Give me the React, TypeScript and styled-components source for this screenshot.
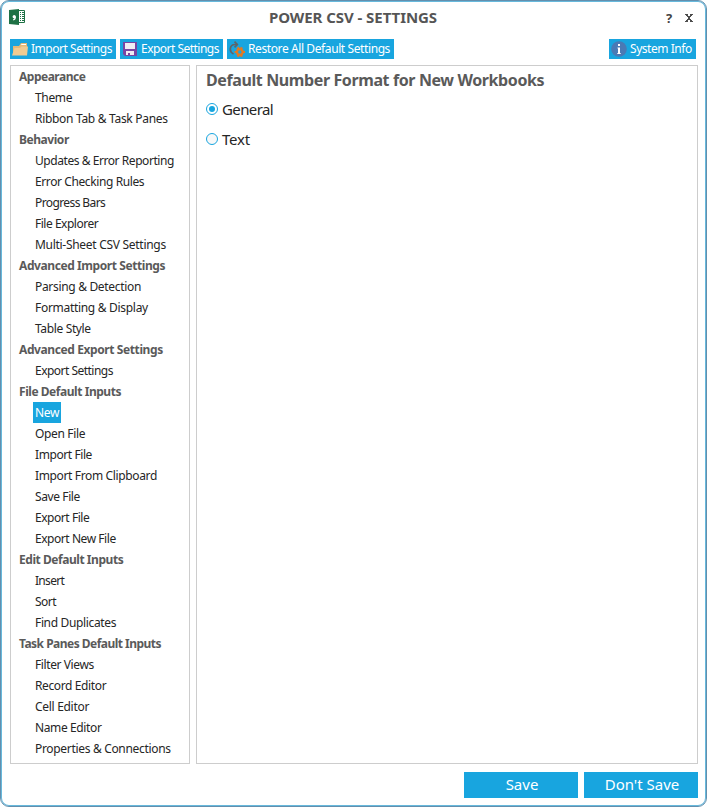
import React from "react";
import styled, { createGlobalStyle } from "styled-components";

const BLUE = "#18a5df";

const GlobalStyle = createGlobalStyle`
  * { box-sizing: border-box; }
  html, body { margin: 0; background: #fff; }
  body { font-family: "Noto Sans", "Open Sans", sans-serif; color: #222; overflow: hidden; }
  button { font: inherit; border: 0; padding: 0; margin: 0; background: none; }
`;

const Window = styled.main`
  width: 707px;
  height: 807px;
  display: flex;
  flex-direction: column;
  border: 1px solid #648fad;
  border-radius: 9px;
  box-shadow: inset 0 0 0 1px #67b9dc;
  background: #fff;
  padding: 0 8px 8px 9px;
`;

const TitleBar = styled.header`
  height: 38px;
  flex: none;
  display: grid;
  grid-template-columns: 60px 1fr 60px;
  align-items: start;
`;

const AppIcon = styled.svg`
  display: block;
  margin: 8px 0 0 -1px;
`;

const Title = styled.h1`
  margin: 6px 0 0 -2px;
  font-size: 15px;
  line-height: 20px;
  font-weight: 700;
  color: #555;
  text-align: center;
  white-space: nowrap;
  letter-spacing: -0.06px;
`;

const WindowControls = styled.div`
  display: flex;
  justify-content: flex-end;
  gap: 10px;
  padding: 7px 4px 0 0;
`;

const ControlButton = styled.button`
  width: 10px;
  height: 20px;
  display: flex;
  align-items: center;
  justify-content: center;
  font-size: 13px;
  font-weight: 700;
  color: #444;
`;

const Toolbar = styled.nav`
  display: flex;
  gap: 4px;
  height: 20px;
  flex: none;
  padding-right: 2px;
`;

const ToolButton = styled.button<{ $width: number; $end?: boolean; $spacing: number }>`
  width: ${(p) => p.$width}px;
  height: 20px;
  margin-left: ${(p) => (p.$end ? "auto" : "0")};
  display: flex;
  align-items: center;
  gap: 3px;
  padding-left: 2px;
  background: ${BLUE};
  color: #fff;
  font-size: 12px;
  line-height: 20px;
  letter-spacing: ${(p) => p.$spacing}px;
  white-space: nowrap;
  svg { flex: none; display: block; }
`;

const Body = styled.div`
  display: flex;
  gap: 6px;
  height: 699px;
  margin-top: 6px;
  flex: none;
`;

const Sidebar = styled.aside`
  width: 180px;
  border: 1px solid #cdcdcd;
`;

const GroupTitle = styled.h2<{ $spacing: number }>`
  margin: 0;
  height: 21px;
  padding-left: 8px;
  font-size: 12px;
  line-height: 21px;
  font-weight: 700;
  color: #5a5a5a;
  white-space: nowrap;
  letter-spacing: ${(p) => p.$spacing}px;
`;

const Item = styled.button<{ $active: boolean; $spacing: number }>`
  display: block;
  height: 21px;
  margin-left: 22px;
  padding: 0 2px;
  font-size: 12px;
  line-height: 21px;
  white-space: nowrap;
  letter-spacing: ${(p) => p.$spacing}px;
  color: ${(p) => (p.$active ? "#fff" : "#262626")};
  background: ${(p) => (p.$active ? BLUE : "transparent")};
`;

const Panel = styled.section`
  width: 502px;
  border: 1px solid #cdcdcd;
  padding: 3px 9px;
`;

const PanelTitle = styled.h2`
  margin: 0 0 3px;
  font-size: 16px;
  line-height: 22px;
  font-weight: 700;
  color: #5a5a5a;
  white-space: nowrap;
  letter-spacing: -0.39px;
`;

const Option = styled.label<{ $spacing: number }>`
  display: flex;
  align-items: center;
  gap: 4px;
  height: 30px;
  font-size: 15px;
  letter-spacing: ${(p) => p.$spacing}px;
  color: #262626;
`;

const Radio = styled.span<{ $checked: boolean }>`
  width: 12px;
  height: 12px;
  border: 1px solid ${BLUE};
  border-radius: 50%;
  padding: 2px;
  display: block;
  margin-top: -1px;
  background: ${(p) => (p.$checked ? "#fff" : "#f8f8f8")};
  &::after {
    content: "";
    display: block;
    width: 6px;
    height: 6px;
    border-radius: 50%;
    background: ${(p) => (p.$checked ? BLUE : "transparent")};
  }
`;

const Footer = styled.footer`
  display: flex;
  justify-content: flex-end;
  gap: 6px;
  margin-top: 8px;
`;

const FooterButton = styled.button`
  width: 114px;
  height: 26px;
  background: ${BLUE};
  color: #fff;
  font-size: 15px;
  line-height: 24px;
  padding: 0 0 2px 2px;
`;

const FolderIcon = () => (
  <svg width="16" height="16" viewBox="0 0 16 16">
    <path d="M1 14V5h6l2-3h6v12z" fill="#e3b878" />
    <path d="M9.500 3h4.500v1H9z" fill="#fff" />
    <path d="M0 14.500 2.500 7H8l1.500-1.500H16l-1 9z" fill="#efcb92" />
  </svg>
);

const DiskIcon = () => (
  <svg width="16" height="16" viewBox="0 0 16 16">
    <path d="M1 1h14v14H3l-2-2z" fill="#7845a3" />
    <path d="M3 2h10v6H3z" fill="#f0edf3" />
    <path d="M4 10h8v4H4z" fill="#f0edf3" />
    <path d="M6 12h2v2H6z" fill="#7845a3" />
  </svg>
);

const RestoreIcon = () => (
  <svg width="16" height="16" viewBox="0 0 16 16">
    <path d="M4.500 13C-.4 10.500.6 3.500 6 3.500h2" fill="none" stroke="#5f6468" strokeWidth="1.700" />
    <path d="M5.500.7 8.300 3.500 5.500 6.300" fill="none" stroke="#5f6468" strokeWidth="1.700" />
    <g stroke="#e07a22" fill="none" strokeWidth="2.200">
      <circle cx="10.800" cy="11" r="2.800" />
      <path d="M8.800 6.200 9.800 8.500M12.800 6.200 11.800 8.500M8.800 15.800l1-2.300M12.800 15.800l-1-2.300M5.600 11h2.400M13.600 11H16" />
    </g>
  </svg>
);

const InfoIcon = () => (
  <svg width="16" height="16" viewBox="0 0 16 16">
    <circle cx="8" cy="8" r="7.800" fill="#4a7ab5" />
    <path d="M7 3h2v2H7zM6.500 6.500H9V12h.7v1H6.300v-1H7V7.500h-.5z" fill="#fff" />
  </svg>
);

const WorkbookIcon = () => (
  <AppIcon width="17" height="17" viewBox="0 0 17 17">
    <path d="M9 1.500h6.500v12H9z" fill="#fff" stroke="#1e7145" />
    <path d="M11 3h1v1h-1zM13 3h2v1h-2zM11 5h1v1h-1zM13 5h2v1h-2zM11 7h1v1h-1zM13 7h2v1h-2zM11 9h1v1h-1zM13 9h2v1h-2zM11 11h1v1h-1zM13 11h2v1h-2z" fill="#1e7145" />
    <path d="M0 1 10 0v16L0 15z" fill="#1e7145" />
    <circle cx="5.200" cy="7.700" r="1.600" fill="#fff" />
    <path d="M6.200 7.500C6.500 9.500 5.500 10.600 4.200 11" fill="none" stroke="#fff" strokeWidth="1.200" />
  </AppIcon>
);

const CloseIcon = () => (
  <svg width="8" height="8" viewBox="0 0 8 8" shapeRendering="crispEdges">
    <path d="M0 0h3v2h2V0h3v1H7v1H6v1H5v2h1v1h1v1h1v1H5V6H3v2H0V7h1V6h1V5h1V3H2V2H1V1H0z" fill="#4d4d4d" />
  </svg>
);

type Group = { title: string; spacing: number; items: [string, number][] };

const groups: Group[] = [
  { title: "Appearance", spacing: -0.5, items: [["Theme", -0.35], ["Ribbon Tab & Task Panes", -0.3]] },
  {
    title: "Behavior",
    spacing: -0.45,
    items: [
      ["Updates & Error Reporting", -0.44],
      ["Error Checking Rules", -0.4],
      ["Progress Bars", -0.6],
      ["File Explorer", -0.48],
      ["Multi-Sheet CSV Settings", -0.29],
    ],
  },
  {
    title: "Advanced Import Settings",
    spacing: -0.42,
    items: [["Parsing & Detection", -0.32], ["Formatting & Display", -0.3], ["Table Style", -0.36]],
  },
  { title: "Advanced Export Settings", spacing: -0.4, items: [["Export Settings", -0.52]] },
  {
    title: "File Default Inputs",
    spacing: -0.45,
    items: [
      ["New", -0.3],
      ["Open File", -0.35],
      ["Import File", -0.42],
      ["Import From Clipboard", -0.36],
      ["Save File", -0.4],
      ["Export File", -0.45],
      ["Export New File", -0.45],
    ],
  },
  {
    title: "Edit Default Inputs",
    spacing: -0.45,
    items: [["Insert", -0.7], ["Sort", -0.5], ["Find Duplicates", -0.35]],
  },
  {
    title: "Task Panes Default Inputs",
    spacing: -0.52,
    items: [
      ["Filter Views", -0.4],
      ["Record Editor", -0.38],
      ["Cell Editor", -0.3],
      ["Name Editor", -0.38],
      ["Properties & Connections", -0.32],
    ],
  },
];

const formats = [
  { label: "General", spacing: -0.6 },
  { label: "Text", spacing: -0.25 },
];

export default function App() {
  const [selected, setSelected] = React.useState("New");
  const [format, setFormat] = React.useState("General");
  return (
    <>
      <GlobalStyle />
      <Window>
        <TitleBar>
          <WorkbookIcon />
          <Title>POWER CSV - SETTINGS</Title>
          <WindowControls>
            <ControlButton>?</ControlButton>
            <ControlButton aria-label="Close"><CloseIcon /></ControlButton>
          </WindowControls>
        </TitleBar>
        <Toolbar>
          <ToolButton $width={106} $spacing={-0.47}><FolderIcon />Import Settings</ToolButton>
          <ToolButton $width={103} $spacing={-0.52}><DiskIcon />Export Settings</ToolButton>
          <ToolButton $width={167} $spacing={-0.4}><RestoreIcon />Restore All Default Settings</ToolButton>
          <ToolButton $width={87} $spacing={-0.45} $end><InfoIcon />System Info</ToolButton>
        </Toolbar>
        <Body>
          <Sidebar>
            {groups.map((g) => (
              <React.Fragment key={g.title}>
                <GroupTitle $spacing={g.spacing}>{g.title}</GroupTitle>
                {g.items.map(([label, spacing]) => (
                  <Item key={label} $active={label === selected} $spacing={spacing} onClick={() => setSelected(label)}>
                    {label}
                  </Item>
                ))}
              </React.Fragment>
            ))}
          </Sidebar>
          <Panel>
            <PanelTitle>Default Number Format for New Workbooks</PanelTitle>
            {formats.map((o) => (
              <Option key={o.label} $spacing={o.spacing} onClick={() => setFormat(o.label)}>
                <Radio $checked={o.label === format} />
                {o.label}
              </Option>
            ))}
          </Panel>
        </Body>
        <Footer>
          <FooterButton>Save</FooterButton>
          <FooterButton>Don't Save</FooterButton>
        </Footer>
      </Window>
    </>
  );
}
